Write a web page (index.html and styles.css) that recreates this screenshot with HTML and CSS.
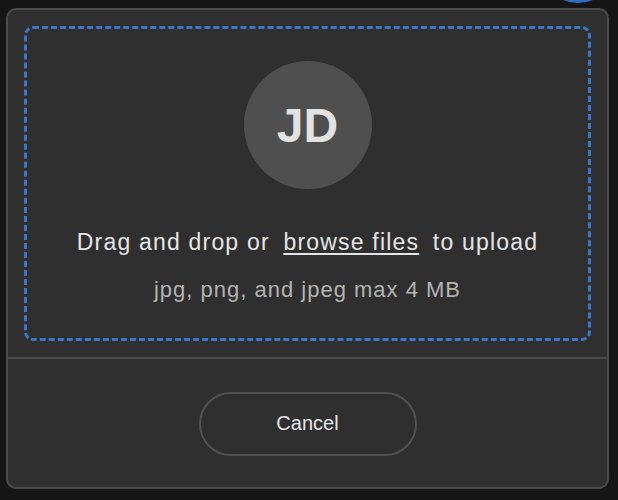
FILE: index.html
```html
<!DOCTYPE html>
<html lang="en">
<head>
<meta charset="utf-8">
<title>Upload avatar</title>
<link rel="stylesheet" href="styles.css">
</head>
<body>
<div class="badge"></div>
<div class="dialog">
  <div class="dialog-body">
    <div class="dropzone">
      <div class="avatar">JD</div>
      <p class="drop-text">Drag and drop or <span class="browse">browse files</span> to upload</p>
      <p class="drop-hint">jpg, png, and jpeg max 4 MB</p>
    </div>
  </div>
  <div class="dialog-footer">
    <button class="cancel-btn" type="button">Cancel</button>
  </div>
</div>
</body>
</html>
```
FILE: styles.css
```css
html, body {
  margin: 0;
  padding: 0;
}
body {
  background: #161616;
  font-family: "Liberation Sans", Arial, sans-serif;
  width: 618px;
  height: 500px;
  overflow: hidden;
  position: relative;
}
.badge {
  position: absolute;
  left: 538px;
  top: -77px;
  width: 80px;
  height: 80px;
  border-radius: 50%;
  background: #2f6cc2;
}
.dialog {
  box-sizing: border-box;
  margin: 8px 0 0 6px;
  width: 603px;
  height: 481px;
  background: #2f2f2f;
  border: 2px solid #4b4b4b;
  border-radius: 10px;
  display: flex;
  flex-direction: column;
}
.dialog-body {
  padding: 16px;
  border-bottom: 2px solid #4b4b4b;
}
.dropzone {
  box-sizing: border-box;
  height: 315px;
  border: 3px dashed #3a77c9;
  border-radius: 9px;
  display: flex;
  flex-direction: column;
  align-items: center;
  padding-top: 32px;
}
.avatar {
  width: 128px;
  height: 128px;
  border-radius: 50%;
  background: #4f4f4f;
  color: #e2e2e2;
  font-weight: bold;
  font-size: 48px;
  display: flex;
  align-items: center;
  justify-content: center;
}
.drop-text {
  margin: 39px 0 0;
  font-size: 23px;
  line-height: 28px;
  letter-spacing: 1.2px;
  color: #e6e6e6;
}
.browse {
  text-decoration: underline;
  text-underline-offset: 3px;
  margin: 0 6px;
}
.drop-hint {
  margin: 22px 0 0;
  font-size: 22px;
  line-height: 24px;
  letter-spacing: 1px;
  color: #b3b3b3;
}
.dialog-footer {
  flex: 1;
  display: flex;
  align-items: center;
  justify-content: center;
}
.cancel-btn {
  box-sizing: border-box;
  width: 218px;
  height: 64px;
  border-radius: 32px;
  border: 2px solid #515151;
  background: transparent;
  color: #e6e6e6;
  font-family: "Liberation Sans", Arial, sans-serif;
  font-size: 20px;
  margin-top: 1px;
  cursor: pointer;
}
```
